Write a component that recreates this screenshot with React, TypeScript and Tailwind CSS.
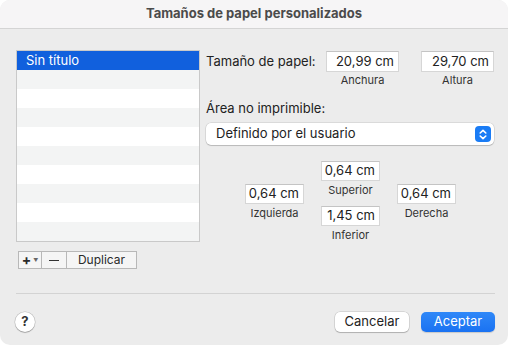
import React from "react";

const font = { fontFamily: "Inter, 'Noto Sans', sans-serif" };

function Field({ value, label }: { value: string; label: string }) {
  return (
    <div className="flex flex-col items-center">
      <div className="w-[73px] h-[21px] bg-white border border-[#d6d6d6] border-t-[#c4c4c4] flex items-center justify-end pr-[4px] text-[13px] text-[#222]">
        {value}
      </div>
      <div className="mt-[1px] text-[11px] leading-[14px] text-[#333]">{label}</div>
    </div>
  );
}

function MarginField({ value, label }: { value: string; label: string }) {
  return (
    <div className="flex flex-col items-center w-[59px]">
      <div className="w-[59px] h-[20px] bg-white border border-[#d6d6d6] border-t-[#c4c4c4] flex items-center justify-end pr-[4px] text-[13px] text-[#222]">
        {value}
      </div>
      <div className="mt-[2px] text-[11px] leading-[14px] text-[#333] whitespace-nowrap">{label}</div>
    </div>
  );
}

export default function App() {
  const rows = Array.from({ length: 10 });

  return (
    <div className="w-[508px] h-[345px] bg-white" style={font}>
      <div className="w-[508px] h-[345px] bg-[#ececec] rounded-[10px] overflow-hidden flex flex-col">
        {/* Title bar */}
        <div className="h-[29px] shrink-0 bg-[#f6f5f6] border-b border-[#d4d4d4] flex items-center justify-center text-[13px] font-bold text-[#4b4b4b]">
          Tamaños de papel personalizados
        </div>

        {/* Body */}
        <div className="h-[264px] shrink-0 flex pl-[16px] pr-[13px] pt-[21px]">
          {/* Left: list */}
          <div className="w-[184px] flex flex-col">
            <div className="h-[192px] border border-[#c9c9c9] bg-white flex flex-col">
              {rows.map((_, i) => (
                <div
                  key={i}
                  className={
                    i === 0
                      ? "h-[19px] bg-[#1160dd] text-white text-[13px] flex items-center pl-[9px]"
                      : i % 2 === 1
                      ? "h-[19px] bg-[#f3f4f4]"
                      : "h-[19px] bg-white"
                  }
                >
                  {i === 0 ? "Sin título" : null}
                </div>
              ))}
            </div>
            <div className="mt-[9px] ml-[2px] flex h-[18px] text-[12px] text-[#2a2a2a]">
              <div className="w-[24px] border border-[#b8b8b8] bg-[#f5f5f5] flex items-center justify-center gap-[2px]">
                <span className="font-bold text-[14px] leading-none">+</span>
                <span className="text-[5px] leading-none text-[#666]">▼</span>
              </div>
              <div className="w-[25px] border border-l-0 border-[#b8b8b8] bg-[#f5f5f5] flex items-center justify-center">
                <div className="w-[10px] h-[1px] bg-[#333]" />
              </div>
              <div className="w-[70px] border border-l-0 border-[#b8b8b8] bg-[#f5f5f5] flex items-center justify-center">
                Duplicar
              </div>
            </div>
          </div>

          {/* Right: settings */}
          <div className="ml-[6px] flex-1 flex flex-col">
            <div className="mt-[1px] flex items-start">
              <div className="w-[120px] h-[21px] flex items-center text-[13px] text-[#222]">
                Tamaño de papel:
              </div>
              <Field value="20,99 cm" label="Anchura" />
              <div className="w-[22px]" />
              <Field value="29,70 cm" label="Altura" />
            </div>

            <div className="mt-[13px] text-[13px] leading-[16px] text-[#222]">Área no imprimible:</div>

            <div className="mt-[7px] w-[288px] h-[22px] bg-white rounded-[5px] shadow-[0_0_0_0.5px_rgba(0,0,0,0.15),0_1px_1px_rgba(0,0,0,0.15)] flex items-center justify-between pl-[10px] pr-[3px] text-[13px] text-[#222]">
              <span>Definido por el usuario</span>
              <div className="w-[16px] h-[16px] rounded-[4px] bg-[#1a7cf5] flex items-center justify-center">
                <svg width="8" height="11" viewBox="0 0 8 11" fill="none" stroke="white" strokeWidth="1.6" strokeLinecap="round" strokeLinejoin="round">
                  <path d="M1.2 4 L4 1.3 L6.8 4" />
                  <path d="M1.2 7 L4 9.7 L6.8 7" />
                </svg>
              </div>
            </div>

            {/* Margins */}
            <div className="mt-[16px] ml-[39px] flex items-center gap-[17px]">
              <MarginField value="0,64 cm" label="Izquierda" />
              <div className="flex flex-col gap-[9px]">
                <MarginField value="0,64 cm" label="Superior" />
                <MarginField value="1,45 cm" label="Inferior" />
              </div>
              <MarginField value="0,64 cm" label="Derecha" />
            </div>
          </div>
        </div>

        {/* Separator */}
        <div className="h-[1px] ml-[16px] mr-[13px] bg-[#d3d3d3]" />

        {/* Footer */}
        <div className="pt-[18px] pl-[15px] pr-[13px] flex items-center">
          <div className="w-[20px] h-[20px] rounded-full bg-white shadow-[0_0_0_0.5px_rgba(0,0,0,0.2),0_1px_1px_rgba(0,0,0,0.2)] flex items-center justify-center text-[13px] font-bold text-[#333]">
            ?
          </div>
          <div className="flex-1" />
          <div className="w-[74px] h-[20px] rounded-[5px] bg-white shadow-[0_0_0_0.5px_rgba(0,0,0,0.18),0_1px_1px_rgba(0,0,0,0.18)] flex items-center justify-center text-[13px] text-[#222]">
            Cancelar
          </div>
          <div className="ml-[12px] w-[74px] h-[20px] rounded-[5px] bg-gradient-to-b from-[#2f88f8] to-[#1a72f2] shadow-[0_1px_1px_rgba(0,0,0,0.15)] flex items-center justify-center text-[13px] text-white">
            Aceptar
          </div>
        </div>
      </div>
    </div>
  );
}
